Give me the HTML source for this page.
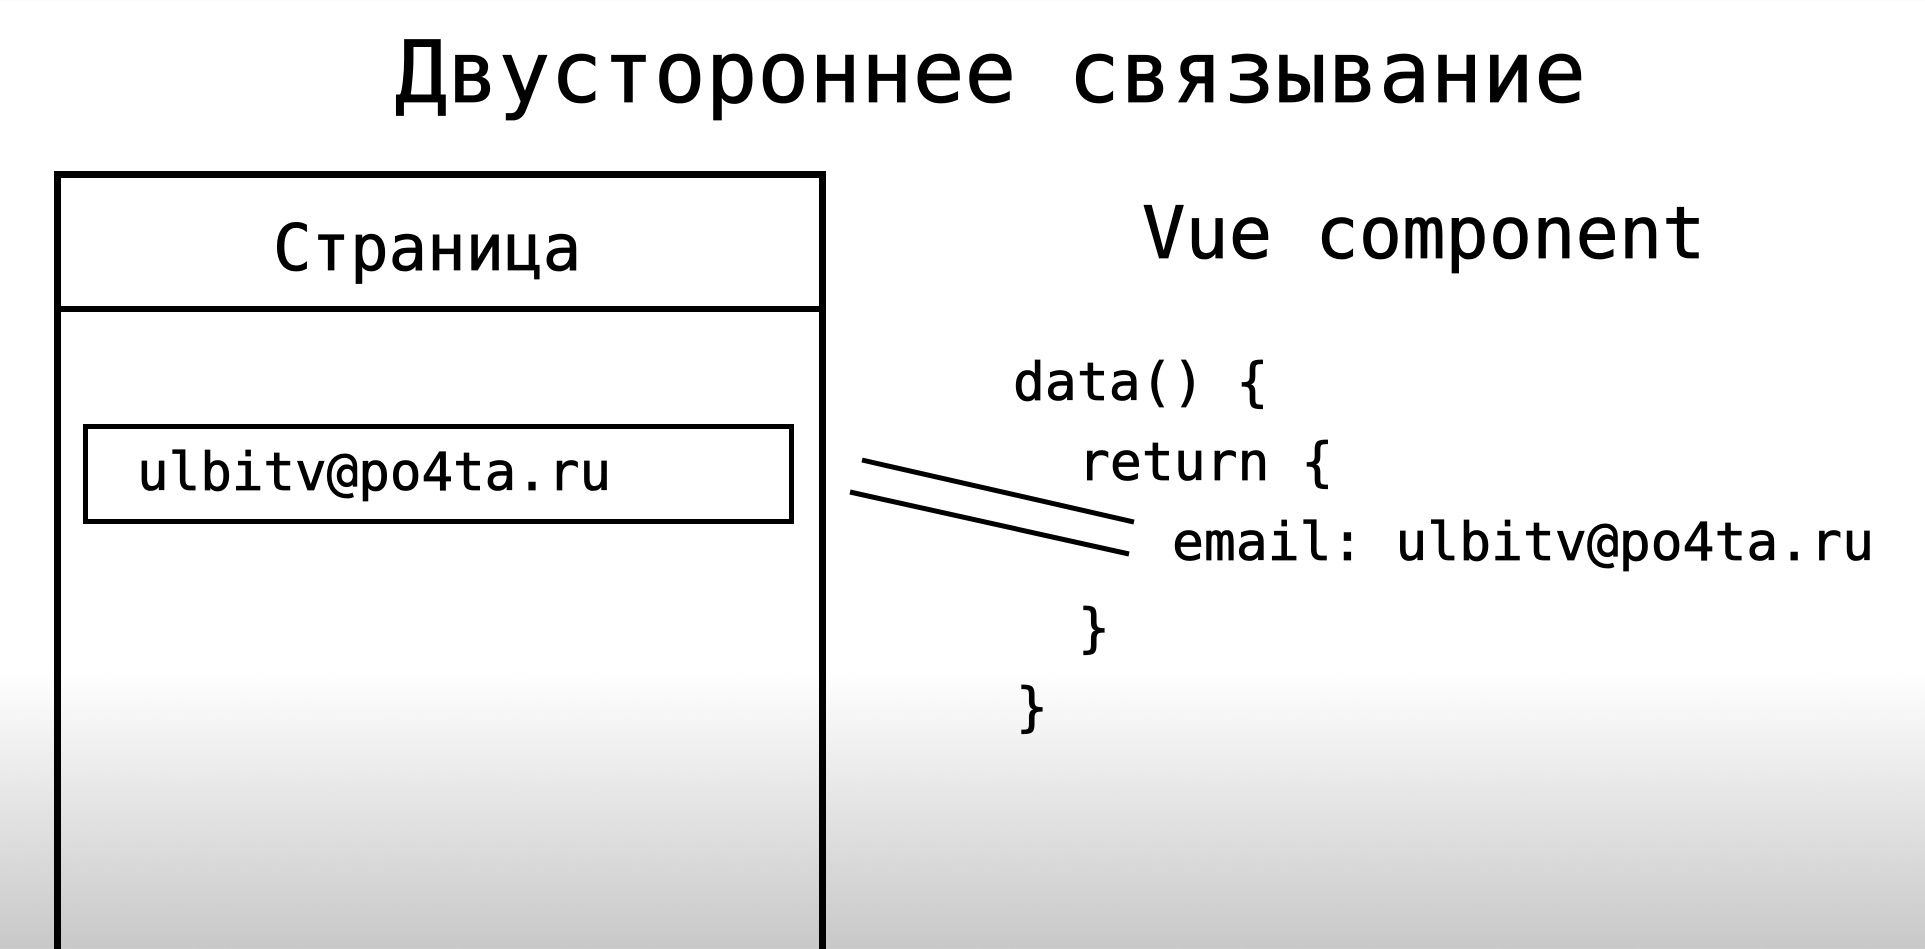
<!DOCTYPE html>
<html><head><meta charset="utf-8"><style>
html,body{margin:0;padding:0;width:1925px;height:949px;overflow:hidden}
body{position:relative;
background:linear-gradient(to bottom,#fff 0,#fff 670px,#c8c8c8 949px);
font-family:"DejaVu Sans Mono","Liberation Mono",monospace;color:#000;font-weight:normal}
.t{position:absolute;white-space:pre;line-height:1;-webkit-text-stroke:0.8px #000}
</style></head><body>
<div class="t" style="left:395px;top:30px;font-size:86px;">Двустороннее связывание</div>
<div style="position:absolute;left:54px;top:171px;width:758px;height:800px;border:7px solid #000;border-bottom:none;"></div>
<div style="position:absolute;left:54px;top:306px;width:772px;height:6px;background:#000"></div>
<div class="t" style="left:273px;top:217px;font-size:64px;">Страница</div>
<div style="position:absolute;left:83px;top:424px;width:701px;height:90px;border:5px solid #000;"></div>
<div class="t" style="left:137px;top:447px;font-size:52.5px;">ulbitv@po4ta.ru</div>
<div class="t" style="left:1142px;top:197px;font-size:72px;">Vue component</div>
<div class="t" style="left:1013px;top:356px;font-size:53px;">data() {</div>
<div class="t" style="left:1078px;top:436px;font-size:53px;">return {</div>
<div class="t" style="left:1172px;top:516px;font-size:53px;">email: ulbitv@po4ta.ru</div>
<div class="t" style="left:1078px;top:602px;font-size:53px;">}</div>
<div class="t" style="left:1016px;top:681px;font-size:53px;">}</div>
<svg style="position:absolute;left:0;top:0" width="1925" height="949">
<line x1="862" y1="460" x2="1134" y2="522" stroke="#000" stroke-width="5"/>
<line x1="850" y1="492" x2="1129" y2="554" stroke="#000" stroke-width="5"/>
</svg>
</body></html>
